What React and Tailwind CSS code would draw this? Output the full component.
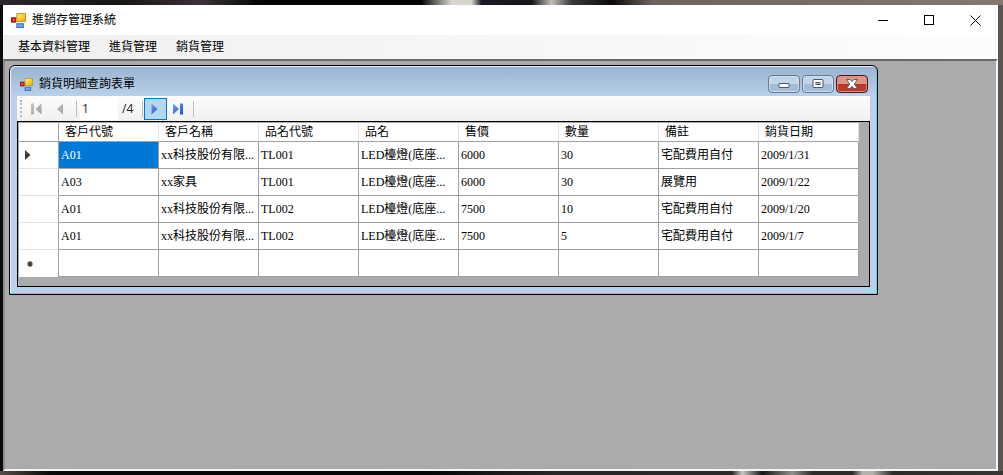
import React from "react";

function FormIcon({ className }) {
  return (
    <svg className={className} viewBox="0 0 14 14" aria-hidden="true">
      <defs>
        <linearGradient id="gold" x1="0" y1="0" x2="1" y2="1">
          <stop offset="0" stopColor="#fff0a8" />
          <stop offset="0.5" stopColor="#fbd02c" />
          <stop offset="1" stopColor="#e9a80c" />
        </linearGradient>
      </defs>
      <rect x="0.5" y="4.5" width="4" height="4" fill="#d8321c" stroke="#8c1a12" />
      <rect x="2" y="6" width="1" height="1" fill="#f7a08c" />
      <rect x="5.5" y="10" width="6" height="3.5" fill="#6ea2f4" stroke="#3a6fd0" />
      <rect x="5.5" y="0.5" width="8" height="7.5" fill="url(#gold)" stroke="#c79a2c" />
    </svg>
  );
}

const columns = ["客戶代號", "客戶名稱", "品名代號", "品名", "售價", "數量", "備註", "銷貨日期"];

const rows = [
  ["A01", "xx科技股份有限...", "TL001", "LED檯燈(底座...", "6000", "30", "宅配費用自付", "2009/1/31"],
  ["A03", "xx家具", "TL001", "LED檯燈(底座...", "6000", "30", "展覽用", "2009/1/22"],
  ["A01", "xx科技股份有限...", "TL002", "LED檯燈(底座...", "7500", "10", "宅配費用自付", "2009/1/20"],
  ["A01", "xx科技股份有限...", "TL002", "LED檯燈(底座...", "7500", "5", "宅配費用自付", "2009/1/7"],
];

function WindowButton({ label, children }) {
  return (
    <button type="button" aria-label={label} className="flex h-7 w-[46px] items-center justify-center">
      <svg className="size-[11px]" viewBox="0 0 11 11" fill="none" stroke="#000" shapeRendering="crispEdges">
        {children}
      </svg>
    </button>
  );
}

function TitleBar() {
  return (
    <header className="flex h-[30px] items-center bg-white pl-2">
      <FormIcon className="size-[15px]" />
      <h1 className="ml-1.5 flex-1 text-xs">進銷存管理系統</h1>
      <WindowButton label="最小化">
        <path d="M0 5.5h10" />
      </WindowButton>
      <WindowButton label="最大化">
        <rect x="0.5" y="0.5" width="9" height="9" />
      </WindowButton>
      <button type="button" aria-label="關閉" className="flex h-7 w-[46px] items-center justify-center">
        <svg className="size-[11px]" viewBox="0 0 11 11" stroke="#000">
          <path d="M0.5 0.5l10 10M10.5 0.5l-10 10" />
        </svg>
      </button>
    </header>
  );
}

function ChildTitleBar() {
  return (
    <header className="flex h-[30px] items-center pl-[3px] pr-0.5 pt-1.5">
      <FormIcon className="size-[13px]" />
      <h2 className="ml-1.5 flex-1 text-xs">銷貨明細查詢表單</h2>
      <div className="flex gap-0.5">
        <button type="button" aria-label="最小化" className="flex h-[18px] w-8 items-center justify-center rounded-sm border border-[#62799a] bg-linear-to-b from-[#c3d4e8] from-50% to-[#a3bcda] to-50% shadow-[inset_0_0_0_1px_#d0deee]">
          <svg className="size-3" viewBox="0 0 12 12"><rect x="1" y="5.500" width="10" height="4" rx="0.5" fill="#fff" stroke="#4d5568" /></svg>
        </button>
        <button type="button" aria-label="最大化" className="flex h-[18px] w-8 items-center justify-center rounded-sm border border-[#62799a] bg-linear-to-b from-[#c3d4e8] from-50% to-[#a3bcda] to-50% shadow-[inset_0_0_0_1px_#d0deee]">
          <svg className="size-3" viewBox="0 0 12 12" stroke="#4d5568"><rect x="1" y="1.500" width="10" height="8" rx="0.5" fill="#fff" /><rect x="4" y="4.500" width="4" height="2" fill="#a9bfd9" /></svg>
        </button>
        <button type="button" aria-label="關閉" className="flex h-[18px] w-8 items-center justify-center rounded-sm border border-[#4b1a20] bg-linear-to-b from-[#dd9585] from-50% to-[#bf3823] to-50% shadow-[inset_0_0_0_1px_#dc8f80]">
          <svg className="size-3" viewBox="0 0 12 12" fill="#fff" stroke="#53535f" strokeWidth="0.9"><path d="M0.500 1.500h3.700L6 3.700l1.800-2.200h3.700L8.200 6l3.300 4.500H7.800L6 8.300l-1.800 2.200H0.500L3.800 6z" /></svg>
        </button>
      </div>
    </header>
  );
}

function NavIcon({ direction, bar }) {
  const fill = direction === "left" ? "url(#navGray)" : "url(#navBlue)";
  return (
    <svg className="size-3" viewBox="0 0 12 12" fill={fill}>
      <defs>
        <linearGradient id="navGray" gradientUnits="userSpaceOnUse" x1="0" y1="0" x2="12" y2="12">
          <stop offset="0" stopColor="#c6c6c6" />
          <stop offset="1" stopColor="#9a9a9a" />
        </linearGradient>
        <linearGradient id="navBlue" gradientUnits="userSpaceOnUse" x1="0" y1="0" x2="10" y2="12">
          <stop offset="0" stopColor="#7ea6f8" />
          <stop offset="1" stopColor="#1c48d0" />
        </linearGradient>
      </defs>
      {direction === "left" ? (
        <>
          {bar && <rect x="0" y="0.5" width="3" height="11" />}
          <path d={bar ? "M10.500 0.5v11L4.500 6z" : "M8 0.5v11L2 6z"} />
        </>
      ) : (
        <>
          <path d={bar ? "M0 0.5v11l6-5.500z" : "M1.500 0.5v11l6-5.500z"} />
          {bar && <rect x="7" y="0.5" width="3" height="11" />}
        </>
      )}
    </svg>
  );
}

function Separator() {
  return <span className="h-4 w-px bg-[#bdbdbd]" />;
}

function Navigator() {
  return (
    <div role="toolbar" aria-label="記錄導覽" className="flex h-[25px] items-center bg-linear-to-b from-[#fdfdfd] to-[#f0f0f0] pl-[3px]">
      <span className="my-1 w-0 self-stretch border-l-2 border-dotted border-[#b8b8b8]" />
      <button type="button" aria-label="第一筆" disabled className="ml-[3px] flex h-[23px] w-6 items-center justify-center">
        <NavIcon direction="left" bar />
      </button>
      <button type="button" aria-label="上一筆" disabled className="flex h-[23px] w-6 items-center justify-center">
        <NavIcon direction="left" />
      </button>
      <span className="ml-[3px] flex items-center gap-[3px]">
        <Separator />
        <input aria-label="目前位置" defaultValue="1" className="h-[22px] w-[38px] bg-white pl-0.5 font-['Open_Sans','Noto_Sans',sans-serif] text-xs text-[#222] outline-none" />
      </span>
      <span className="w-6 pl-1 font-['Open_Sans','Noto_Sans',sans-serif] text-xs text-[#222]">/4</span>
      <Separator />
      <button type="button" aria-label="下一筆" className="ml-px flex h-[22px] w-[23px] items-center justify-center border border-[#0078d7] bg-[#b3d7f3]">
        <NavIcon direction="right" />
      </button>
      <button type="button" aria-label="最後一筆" className="flex h-[23px] w-6 items-center justify-center">
        <NavIcon direction="right" bar />
      </button>
      <span className="ml-0.5 flex"><Separator /></span>
    </div>
  );
}

function DataGrid() {
  return (
    <div className="border border-black bg-[#ababab] p-px pb-[9px]">
      <table className="w-[calc(100%_-_9px)] table-fixed border-separate border-spacing-0 bg-white font-['Liberation_Serif','Noto_Sans_CJK_TC',serif] text-xs leading-4">
        <colgroup>
          <col className="w-10" />
          {columns.map((c) => <col key={c} />)}
        </colgroup>
        <thead>
          <tr className="h-[19px]">
            <th aria-label="列標頭" className="border-b border-r border-[#a0a0a0] p-0" />
            {columns.map((c) => (
              <th key={c} scope="col" className="border-b border-r border-b-[#a0a0a0] border-r-[#e3e3e3] p-0 pl-1.5 text-left font-normal">
                {c}
              </th>
            ))}
          </tr>
        </thead>
        <tbody>
          {rows.map((row, r) => (
            <tr key={r} className="h-[27px]">
              <th scope="row" aria-label={"第" + (r + 1) + "列"} className="border-b border-r border-b-[#e3e3e3] border-r-[#a0a0a0] p-0 pl-1.5">
                {r === 0 && (
                  <svg className="h-2.5 w-1.5" viewBox="0 0 6 10" fill="#3c3c3c"><path d="M0 0v10l5.500-5z" /></svg>
                )}
              </th>
              {row.map((value, i) => (
                <td key={i} className={r === 0 && i === 0
                  ? "whitespace-nowrap border-b border-r border-[#a0a0a0] bg-[#0078d7] p-0 pl-0.5 text-white"
                  : "whitespace-nowrap border-b border-r border-[#a0a0a0] p-0 pl-0.5"}>
                  {value}
                </td>
              ))}
            </tr>
          ))}
          <tr className="h-[27px]">
            <th scope="row" aria-label="新增列" className="border-r border-[#a0a0a0] p-0 pl-2">
              <svg className="size-1.5" viewBox="0 0 6 6" stroke="#3c3c3c" strokeWidth="1.200"><path d="M3 0v6M0 3h6M1 1l4 4M5 1L1 5" /></svg>
            </th>
            {columns.map((c) => <td key={c} className="border-b border-r border-[#a0a0a0] p-0" />)}
          </tr>
        </tbody>
      </table>
    </div>
  );
}

export default function App() {
  return (
    <div className="flex min-h-screen flex-col bg-linear-to-r from-[#0c0b0c] from-50% to-[#5d5550] font-['Liberation_Sans','Noto_Sans_CJK_TC',sans-serif] text-black">
      <div className="h-[5px] bg-[linear-gradient(90deg,#2b272c_0%,#171418_12%,#3a3238_20%,#050505_26%,#050505_42%,#d8d5cd_45%,#d8d5cd_47%,#1a1a20_48%,#15151a_53%,#c0beb4_55%,#3a3838_57%,#0a0808_61%,#6e625b_65%,#85786f_100%)]" />
      <div className="flex flex-1 flex-col pl-[3px] pr-[5px]">
        <TitleBar />
        <nav className="flex h-6 items-center gap-[19px] bg-linear-to-r from-[#f0f0f0] to-[#fdfdfd] pl-[15px] text-xs">
          <a href="#basic">基本資料管理</a>
          <a href="#purchase">進貨管理</a>
          <a href="#sales">銷貨管理</a>
        </nav>
        <main className="flex-1 border-2 border-[#696969] border-b-[#f4f4f4] border-l-[#8c8c8c] border-r-[#f4f4f4] bg-[#ababab] pl-1 pr-[118px] pt-1">
          <section className="rounded-t-md border border-black bg-[#b9d1ea] bg-linear-to-b from-[#99b4d1] to-[#b9d1ea] to-[30px] px-[7px] pb-[7px] shadow-[inset_-1px_-1px_0_#5fd0dc,inset_1px_1px_0_#e8f1fa]">
            <ChildTitleBar />
            <Navigator />
            <DataGrid />
          </section>
        </main>
      </div>
      <div className="h-1 bg-[linear-gradient(90deg,#5a4c46_0%,#0a0808_5%,#050505_42%,#2b2625_55%,#2f2a29_73%,#c9c9c4_74%,#151515_76%,#8f8f8b_79%,#2f2c2a_81%,#2f2c2a_85%,#b5b2aa_86%,#b5b2aa_87%,#2e2b29_89%,#3a3432_100%)]" />
    </div>
  );
}
